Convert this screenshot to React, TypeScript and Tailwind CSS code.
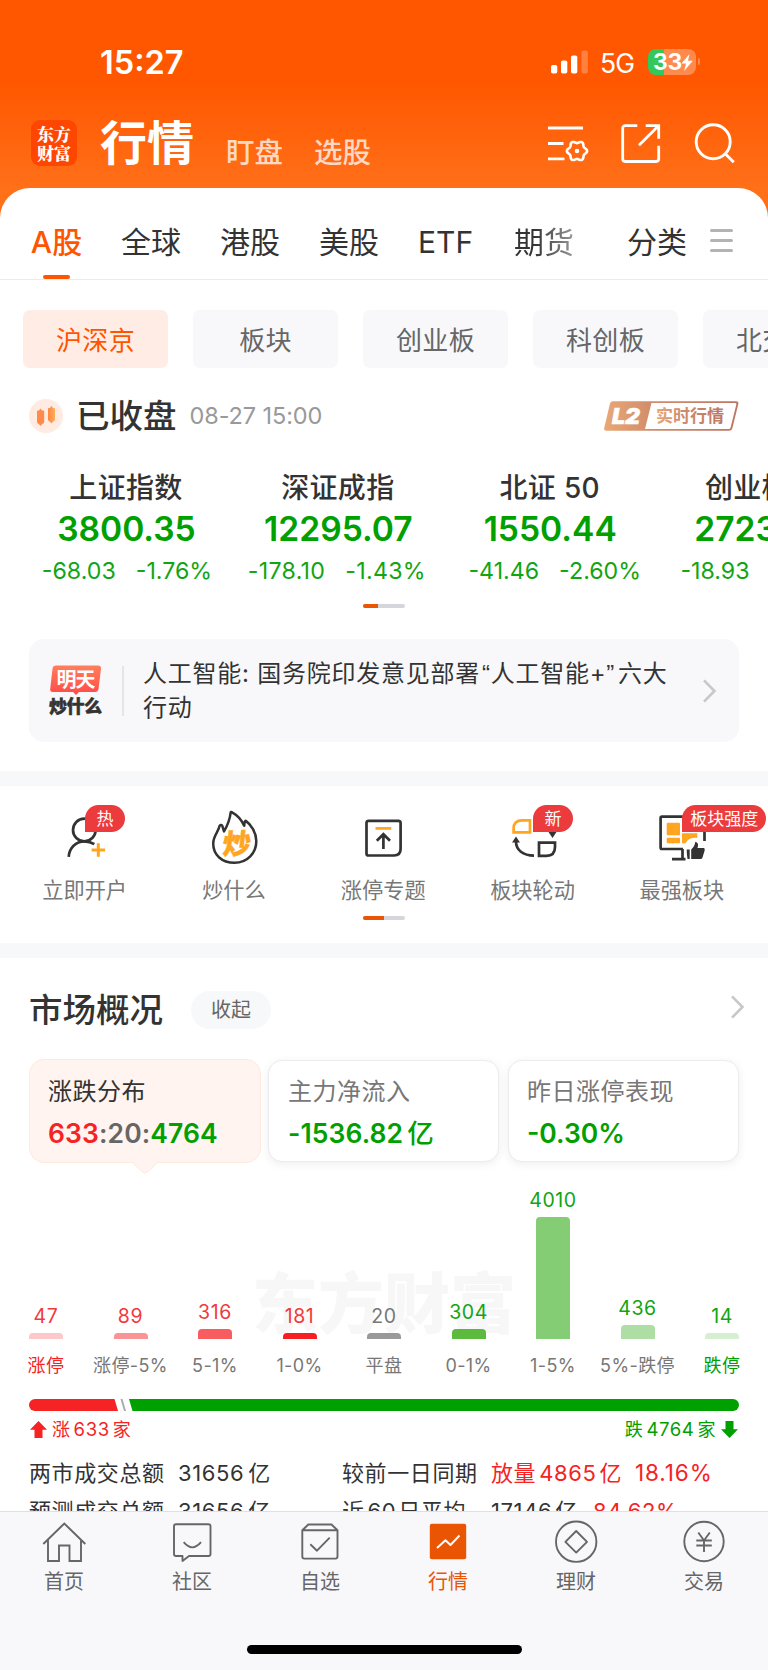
import React from "react";

const tabs = [
  { label: "全球", cls: "w-[60px] ml-[39px]" },
  { label: "港股", cls: "w-[60px] ml-[39px]" },
  { label: "美股", cls: "w-[60px] ml-[39px]" },
  { label: "ETF", cls: "w-[58px] ml-[39px]" },
];

const chips = ["沪深京", "板块", "创业板", "科创板", "北交所"];

const indices = [
  { name: "上证指数", value: "3800.35", diff: "-68.03", pct: "-1.76%", shift: "pl-[2px]" },
  { name: "深证成指", value: "12295.07", diff: "-178.10", pct: "-1.43%", shift: "pr-[2px] tracking-[0.3px]" },
  { name: "北证 50", value: "1550.44", diff: "-41.46", pct: "-2.60%", shift: "pl-[10px]" },
  { name: "创业板指", value: "2723.20", diff: "-18.93", pct: "-0.69%", shift: "pl-[9px]" },
];

const bars = [
  { n: "47", h: 6, color: "bg-[#fcc8ca]", num: "text-[#f23a3d]", label: "涨停", lab: "text-[#f52323]" },
  { n: "89", h: 6, color: "bg-[#f99395]", num: "text-[#f23a3d]", label: "涨停-5%", lab: "text-[#777]" },
  { n: "316", h: 10, color: "bg-[#f75c5f]", num: "text-[#f23a3d]", label: "5-1%", lab: "text-[#777]" },
  { n: "181", h: 6, color: "bg-[#f62023]", num: "text-[#f23a3d]", label: "1-0%", lab: "text-[#777]" },
  { n: "20", h: 6, color: "bg-[#999]", num: "text-[#777]", label: "平盘", lab: "text-[#777]" },
  { n: "304", h: 10, color: "bg-[#5cba3f]", num: "text-[#12a512]", label: "0-1%", lab: "text-[#777]" },
  { n: "4010", h: 122, color: "bg-[#84cd74]", num: "text-[#12a512]", label: "1-5%", lab: "text-[#777]" },
  { n: "436", h: 14, color: "bg-[#aedea3]", num: "text-[#12a512]", label: "5%-跌停", lab: "text-[#777]" },
  { n: "14", h: 6, color: "bg-[#d6efd0]", num: "text-[#12a512]", label: "跌停", lab: "text-[#00a000]" },
];

const gearPoints = Array.from({ length: 96 }, (_, i) => {
  const t = (i / 96) * Math.PI * 2;
  const r = 9 + 1.1 * Math.cos(6 * t);
  return `${(29 + r * Math.cos(t)).toFixed(2)},${(27 + r * Math.sin(t)).toFixed(2)}`;
}).join(" ");

function StatusBar() {
  return (
    <div className="flex h-[76px] items-end pl-[100px] text-white">
      <div className="-mb-[1px] h-[28px] w-[451px] text-[32.5px] leading-[28px] font-semibold">15:27</div>
      <svg className="mb-[2px] h-[24px] w-[38px]" viewBox="0 0 38 24" fill="#fff">
        <rect x="0" y="15" width="6.3" height="8.6" rx="1.8" />
        <rect x="10" y="10.5" width="6.3" height="13.1" rx="1.8" />
        <rect x="20" y="5.5" width="6.3" height="18.1" rx="1.8" />
        <rect x="30.5" y="0.5" width="6.3" height="23.1" rx="1.8" opacity=".25" />
      </svg>
      <div className="mb-px ml-[11px] h-[24px] w-[48px] text-[26.5px] leading-[24px] tracking-[-0.8px]">5G</div>
      <div className="mb-px flex h-[26px] w-[48px] items-center overflow-hidden rounded-[8px] bg-[linear-gradient(90deg,#34c759_33%,#ff8a4d_33%)] pl-[5px]">
        <span className="text-[23px] leading-[26px] font-bold tracking-[-0.4px]">33</span>
        <svg className="-ml-px h-[17px] w-[12px]" viewBox="0 0 12 17" fill="#fff">
          <path d="M8.5 0 0.5 9.6H5L3.2 17 11.8 6.8H7Z" />
        </svg>
      </div>
      <div className="mb-[11px] ml-[2px] h-[7px] w-[2px] rounded-r bg-[#ff8a4d]" />
    </div>
  );
}

function Header() {
  return (
    <div className="flex h-[112px] pl-[31px] text-white">
      <div className="mt-[44px] flex h-[46px] w-[46px] flex-col items-center justify-center rounded-[9px] bg-[#ff4600] font-['Noto_Serif_CJK_SC','Noto_Sans_CJK_SC',serif] text-[17px] leading-[19px] font-black">
        <span>东方</span>
        <span>财富</span>
      </div>
      <div className="mt-[39px] ml-[23px] h-[56px] w-[126px] text-[47px] leading-[56px] font-bold">行情</div>
      <div className="mt-[59px] h-[36px] w-[88px] text-[28.5px] leading-[36px] font-medium text-white/75">盯盘</div>
      <div className="mt-[59px] h-[36px] w-[234px] text-[28.5px] leading-[36px] font-medium text-white/75">选股</div>
      <svg className="mt-[48px] h-[40px] w-[42px]" viewBox="0 0 42 40" fill="none" stroke="#fff" strokeWidth="2.8">
        <path d="M0 4H35M0 19.5H15.5M0 34.8H16.5" />
        <polygon points={gearPoints} strokeWidth="2.6" strokeLinejoin="round" />
        <circle cx="29" cy="27" r="2.3" fill="#fff" stroke="none" />
      </svg>
      <svg className="mt-[47px] ml-[31px] h-[41px] w-[41px]" viewBox="0 0 41 41" fill="none" stroke="#fff" strokeWidth="2.8">
        <path d="M16.3 2.7H4.2A2.5 2.5 0 0 0 1.7 5.2V36.2A2.5 2.5 0 0 0 4.2 38.5H35.2A2.5 2.5 0 0 0 37.7 36.2V22.7M24.7 2.7H37.7V15.7M37.3 3.1 18 22.2" />
      </svg>
      <svg className="mt-[47px] ml-[32px] h-[41px] w-[42px]" viewBox="0 0 42 41" fill="none" stroke="#fff" strokeWidth="2.9">
        <circle cx="19.2" cy="18.7" r="17" />
        <path d="M31 30.5 39.8 39.3" />
      </svg>
    </div>
  );
}

function MarketTabs() {
  return (
    <div className="flex h-[92px] border-b border-[#ebebeb] pl-[31px] text-[30px] text-[#333]">
      <div className="flex w-[51px] flex-col items-center text-[#ff5500]">
        <div className="mt-[32px] h-[44px] text-[30px] leading-[44px] font-medium whitespace-nowrap">A股</div>
        <div className="mt-[11px] h-[4px] w-[27px] rounded-full bg-[#ff5500]" />
      </div>
      {tabs.map((t) => (
        <div key={t.label} className={`mt-[32px] leading-[44px] whitespace-nowrap ${t.cls}`}>
          {t.label}
        </div>
      ))}
      <div className="mt-[32px] ml-[38px] h-[44px] w-[60px] bg-[linear-gradient(90deg,#333_35%,#999_100%)] bg-clip-text leading-[44px] text-transparent">期货</div>
      <div className="mt-[32px] ml-[53px] w-[60px] leading-[44px]">分类</div>
      <div className="mt-[41px] ml-[23px] flex h-[23px] w-[23px] flex-col justify-between">
        <div className="h-[3px] rounded-full bg-[#b3b3b3]" />
        <div className="h-[3px] rounded-full bg-[#b3b3b3]" />
        <div className="h-[3px] rounded-full bg-[#b3b3b3]" />
      </div>
    </div>
  );
}

function LevelTwoBadge() {
  return (
    <svg className="h-[32px] w-[137px]" viewBox="0 0 137 32">
      <defs>
        <linearGradient id="copper" x1="0" x2="1" y1="0" y2="0">
          <stop offset="0" stopColor="#e9a876" />
          <stop offset=".35" stopColor="#d18d6b" />
          <stop offset="1" stopColor="#bd7563" />
        </linearGradient>
      </defs>
      <path d="M10 1.2H133Q136 1.2 135.3 4L129.3 28.5Q128.6 30.8 126 30.8H3.5Q.6 30.8 1.2 28L7 3.6Q7.6 1.2 10 1.2Z" fill="url(#copper)" />
      <path d="M48.5 3H132Q133.7 3 133.3 4.4L127.6 27.4Q127.2 29 125.6 29H42Z" fill="#fff" />
      <text x="9" y="23.7" fontSize="21" fontWeight="900" fontStyle="italic" fill="#fff" stroke="#fff" strokeWidth=".6" textLength="28" lengthAdjust="spacingAndGlyphs">L2</text>
      <text x="53" y="22.3" fontSize="17" fontWeight="700" fill="url(#copper)" textLength="68">实时行情</text>
    </svg>
  );
}

function Pager({ active }: { active: string }) {
  return (
    <div className="h-[4px] w-[42px] overflow-hidden rounded-full bg-[#d4d6dc]">
      <div className={`h-full bg-[#ea5504] ${active}`} />
    </div>
  );
}

function Chevron() {
  return (
    <svg className="h-[26px] w-[16px]" viewBox="0 0 16 26" fill="none" stroke="#c8c8c8" strokeWidth="2.6">
      <path d="M2 2.3 12.5 13 2 23.7" />
    </svg>
  );
}

function Feature({ label, badge, badgeClass, children }: { label: string; badge?: string; badgeClass?: string; children: React.ReactNode }) {
  return (
    <div className="relative flex w-[149.3px] flex-col items-center">
      <svg className="mt-[22px] h-[58px] w-[52px]" viewBox="0 0 52 58" fill="none" stroke="#333" strokeWidth="2.7">
        {children}
      </svg>
      <div className="mt-[9px] text-[21.2px] leading-[30px] whitespace-nowrap text-[#777]">{label}</div>
      {badge && (
        <div className={`absolute top-[19px] left-[75px] h-[27px] rounded-[14px] rounded-bl-none bg-[#ec3b3c] text-center text-[17px] leading-[28px] text-white ${badgeClass}`}>
          {badge}
        </div>
      )}
    </div>
  );
}

function Features() {
  return (
    <div className="flex h-[157px] flex-col items-center bg-white">
      <div className="mr-px flex h-[130px] w-[747px]">
        <Feature label="立即开户" badge="热" badgeClass="w-[40px]">
          <circle cx="25.3" cy="22" r="11.3" />
          <path d="M9.7 48.8C10.2 40 17 33.4 25.3 33.4c3.7 0 7 .9 10 2.8" />
          <path d="M39.3 35.3V48.7M32.6 42H46" stroke="#ffa51f" strokeWidth="3" />
        </Feature>
        <Feature label="炒什么">
          <path d="M22.7 4.3C21.8 12 20 16.5 16 23.5L14.3 17.8Q13 16.3 11.5 18C10.5 24 5.2 27.5 5.2 35.5C5.2 47 14 54.8 26.5 54.8C39.5 54.8 48.3 45 48.3 33C48.3 24.5 43 16.5 37.800 12.9Q36.6 12.5 36.2 17.800C33.5 11.8 29.5 7.3 24.5 4.6Q23 3.7 22.7 4.3Z" strokeLinejoin="round" strokeWidth="2.5" />
          <text x="14.5" y="46.5" fontSize="28" fontWeight="900" fill="#ffa51f" stroke="#ffa51f" strokeWidth=".5" transform="translate(4.2 0) skewX(-6)">炒</text>
        </Feature>
        <Feature label="涨停专题">
          <path d="M11.5 12.8H41.4Q43.6 12.8 43.6 15V41Q43.6 47.5 37 47.5H11.5Q9.5 47.5 9.5 45.5V15Q9.5 12.8 11.5 12.8Z" />
          <path d="M18.5 20.4H34.3" stroke="#ffa51f" />
          <path d="M26.4 41V27M19.8 32.8 26.4 26.2 33 32.8" />
        </Feature>
        <Feature label="板块轮动" badge="新" badgeClass="w-[40px]">
          <path d="M23 12.3H15Q6.6 12.3 6.6 20.5V24.4H23Z" stroke="#ffa51f" />
          <path d="M32 34.6H48V39Q48 47.8 39.5 47.8H32Z" />
          <path d="M27 47.6C16 47.6 9 42 9 33.5" />
          <path d="M9 28.5 13 34.5H5ZM41.5 24H49.5L45.5 30Z" fill="#333" stroke="none" />
        </Feature>
        <Feature label="最强板块" badge="板块强度" badgeClass="w-[84px]">
          <path d="M48.5 30V9.5Q48.5 8.6 47 8.6H6Q4.6 8.6 4.6 10V39.5Q4.6 41 6 41H27M48.5 22V33M16 51.2H29.5M26.5 41V50.5" />
          <g fill="#ffa51f" stroke="none">
            <rect x="10.7" y="14.7" width="13.3" height="12.6" rx="1" />
            <rect x="10.7" y="29.7" width="13.3" height="5.6" rx="1" />
            <path d="M26 25.3H41.3V30Q33 29 29.5 35.3H26Z" />
          </g>
          <path d="M30.7 41.5H33.7V51H31.5Q30.7 46 30.7 41.5ZM35.2 51V41.5Q38.8 38.5 39.3 33.8 43.3 34.8 41.5 40H48Q49.3 40.3 48.5 43L46.5 49.5Q46.2 51 44.5 51Z" fill="#333" stroke="none" />
        </Feature>
      </div>
      <Pager active="w-[21px]" />
    </div>
  );
}

function Overview() {
  return (
    <div className="flex h-[553px] flex-col overflow-hidden bg-white px-[29px]">
      <div className="mt-[28px] flex h-[48px] items-center">
        <div className="text-[33.5px] leading-[48px] font-medium text-[#333]">市场概况</div>
        <div className="ml-[28px] h-[38px] w-[80px] rounded-full bg-[#f7f8fa] text-center text-[20px] leading-[38px] text-[#666]">收起</div>
        <div className="-mt-[6px] -mr-[7px] ml-auto">
          <Chevron />
        </div>
      </div>

      <div className="mt-[25px] flex h-[104px] shrink-0 text-[24px]">
        <div className="relative w-[232px] rounded-[15px] border border-[#ffe8dd] bg-[#fff4ef] pt-[15px] pl-[18px]">
          <div className="leading-[34px] tracking-[0.5px] text-[#333]">涨跌分布</div>
          <div className="mt-[6px] text-[26.5px] leading-[36px] font-semibold tracking-[0.1px] text-[#666]">
            <span className="text-[#f52323]">633</span>:20:<span className="text-[#00a000]">4764</span>
          </div>
          <svg className="absolute top-[101px] left-[101px] h-[14px] w-[28px]" viewBox="0 0 28 14">
            <path d="M1 1.3 12 11.3Q14 12.8 16 11.3L27 1.3V0H1Z" fill="#fff4ef" />
            <path d="M1 1.3 12 11.3Q14 12.8 16 11.3L27 1.3" fill="none" stroke="#ffe8dd" />
          </svg>
        </div>
        <div className="mt-px ml-[7px] h-[102px] w-[231px] rounded-[14px] border border-[#ececec] bg-white pt-[14px] pl-[19px] shadow-[0_2px_10px_rgba(0,0,0,0.07)]">
          <div className="leading-[34px] tracking-[0.5px] text-[#777]">主力净流入</div>
          <div className="mt-[6px] text-[26.5px] leading-[36px] font-semibold tracking-[0.1px] whitespace-nowrap text-[#00a000]">-1536.82<span className="pl-[4px] text-[26.5px] font-medium">亿</span></div>
        </div>
        <div className="mt-px ml-[9px] h-[102px] w-[231px] rounded-[14px] border border-[#ececec] bg-white pt-[14px] pl-[18px] shadow-[0_2px_10px_rgba(0,0,0,0.07)]">
          <div className="leading-[34px] tracking-[0.5px] text-[#777]">昨日涨停表现</div>
          <div className="mt-[6px] text-[26.5px] leading-[36px] font-semibold text-[#00a000]">-0.30%</div>
        </div>
      </div>

      <div className="relative mt-[15px] flex h-[202px] shrink-0 justify-between">
        <div className="absolute top-[78px] left-[223px] text-[66px] leading-[96px] font-black whitespace-nowrap text-[#f7f7f7]">东方财富</div>
        {bars.map((b) => (
          <div key={b.label} className="relative flex w-[34px] flex-col items-center justify-end">
            <div className={`text-[19.5px] leading-[20px] tracking-[0.6px] ${b.num}`}>{b.n}</div>
            <div className={`mt-[7px] w-full shrink-0 rounded-t-[4px] ${b.color}`} style={{ height: b.h }} />
            <div className={`mt-[13px] h-[28px] text-[18px] leading-[28px] tracking-[0.4px] whitespace-nowrap ${b.lab}`}>{b.label}</div>
          </div>
        ))}
      </div>

      <svg className="mt-[19px] h-[12px] w-[710px] shrink-0" viewBox="0 0 710 12">
        <path d="M6 0H85.5L89 12H6A6 6 0 0 1 6 0Z" fill="#f52323" />
        <path d="M91.5 0H93.5L97 12H95Z" fill="#aaa" />
        <path d="M100 0H704A6 6 0 0 1 704 12H103.5Z" fill="#00a000" />
      </svg>

      <div className="mt-[4px] flex h-[28px] shrink-0 items-center text-[18px] leading-[28px] tracking-[0.6px]">
        <svg className="ml-px h-[17px] w-[17px]" viewBox="0 0 17 17" fill="#f52323">
          <path d="M8.5 0 17 8.800H12.5V17H4.5V8.800H0Z" />
        </svg>
        <span className="ml-[5px] text-[#f52323]">涨<span className="px-[3px] text-[18.5px]">633</span>家</span>
        <span className="ml-auto text-[#00a000]">跌<span className="px-[3px] text-[18.5px]">4764</span>家</span>
        <svg className="mr-px ml-[5px] h-[17px] w-[17px]" viewBox="0 0 17 17" fill="#00a000">
          <path d="M8.5 17 17 8.2H12.5V0H4.5V8.2H0Z" />
        </svg>
      </div>

      <div className="mt-[11px] flex h-[38px] shrink-0 text-[22px] leading-[38px] tracking-[0.6px] whitespace-nowrap text-[#333]">
        <div className="w-[149px]">两市成交总额</div>
        <div className="w-[164px]">31656<span className="pl-[4px]">亿</span></div>
        <div className="w-[149px]">较前一日同期</div>
        <div className="w-[144px] text-[#f52323]">放量<span className="px-[3px]">4865</span>亿</div>
        <div className="text-[22.5px] tracking-[0.9px] text-[#f52323]">18.16%</div>
      </div>
      <div className="flex h-[38px] shrink-0 text-[22px] leading-[38px] tracking-[0.6px] whitespace-nowrap text-[#333]">
        <div className="w-[149px]">预测成交总额</div>
        <div className="w-[164px]">31656<span className="pl-[4px]">亿</span></div>
        <div className="w-[149px]">近<span className="pr-[2px] pl-[3px]">60</span>日平均</div>
        <div className="w-[102px]">17146<span className="pl-[3px]">亿</span></div>
        <div className="text-[#f52323]">84.62%</div>
      </div>
    </div>
  );
}

function NavItem({ label, active, children }: { label: string; active?: boolean; children: React.ReactNode }) {
  return (
    <div className={`flex flex-1 flex-col items-center ${active ? "text-[#ea5504]" : "text-[#666]"}`}>
      <svg className="mt-[8px] mr-px h-[44px] w-[44px]" viewBox="0 0 44 44" fill="none" stroke="currentColor" strokeWidth="1.9" strokeLinejoin="round">
        {children}
      </svg>
      <div className="mt-[3px] text-[20px] leading-[30px]">{label}</div>
    </div>
  );
}

function BottomNav() {
  return (
    <div className="flex h-[159px] flex-col items-center border-t border-[#dfe0e2] bg-[#f8f8fb]">
      <div className="flex h-[133px] w-full">
        <NavItem label="首页">
          <path d="M1.3 24 22.3 3.5 43.3 24M6 20V41H17V25.5H27.5V41H39V20" strokeLinejoin="miter" />
        </NavItem>
        <NavItem label="社区">
          <path d="M6 4.3H38.5Q40.5 4.3 40.5 6.3V34Q40.5 36 38.5 36H19L12.5 41V36H6Q4 36 4 34V6.3Q4 4.3 6 4.3ZM13.7 22.2Q22.3 32.5 31 22.2" />
        </NavItem>
        <NavItem label="自选">
          <path d="M10.3 4.5H33.5L39.5 10.2V36.5Q39.5 38.6 37.5 38.6H6.3Q4.3 38.6 4.3 36.5V10.2ZM4.3 10.2H39.5M12.3 24.3 19 30.7 31.7 17.7" />
        </NavItem>
        <NavItem label="行情" active>
          <rect x="3.8" y="3.7" width="36.4" height="35.6" rx="2" fill="#ea5504" stroke="none" />
          <path d="M11 28 19.5 20.3 24.5 25 33.500 15.5" stroke="#fff" strokeWidth="2" />
        </NavItem>
        <NavItem label="理财">
          <circle cx="22.2" cy="21.7" r="20.2" />
          <path d="M22.2 11 33 21.8 22.2 32.6 11.4 21.8Z" />
        </NavItem>
        <NavItem label="交易">
          <circle cx="22" cy="21.5" r="19.7" />
          <path d="M16.3 12.5 22 20.5 27.8 12.5M14.3 20.5H29.8M14.3 25.5H29.8M22 20.5V32" />
        </NavItem>
      </div>
      <div className="h-[9px] w-[275px] rounded-full bg-black" />
    </div>
  );
}

export default function App() {
  return (
    <div className="flex h-[1670px] w-[768px] flex-col overflow-hidden bg-white font-['Inter','Noto_Sans_CJK_SC',sans-serif]">
      <div className="bg-[linear-gradient(180deg,#ff5700_0px,#ff5700_82px,#ff7019_188px,#ff7019_230px)]">
        <StatusBar />
        <Header />
        <div className="rounded-t-[30px] bg-white">
          <MarketTabs />
        </div>
      </div>

      <div className="flex h-[491px] flex-col overflow-hidden">
        <div className="mt-[30px] ml-[23px] flex h-[58px] w-[745px] gap-[25px] overflow-hidden">
          {chips.map((c, i) => (
            <div
              key={c}
              className={`w-[145px] shrink-0 rounded-[7px] text-center text-[26px] leading-[61px] tracking-[0.3px] ${i === 0 ? "bg-[#ffede5] text-[#ff5500]" : "bg-[#f8f8fb] text-[#666]"}`}
            >
              {c}
            </div>
          ))}
        </div>

        <div className="mt-[24px] flex h-[48px] items-center pr-[28px] pl-[29px]">
          <svg className="h-[34px] w-[34px]" viewBox="0 0 34 34">
            <defs>
              <linearGradient id="candle" x1="0" y1="0" x2="1" y2="0">
                <stop offset="0" stopColor="#ff8644" />
                <stop offset="1" stopColor="#ffaf58" />
              </linearGradient>
            </defs>
            <circle cx="17" cy="17" r="17" fill="#ffebe1" />
            <path d="M11.5 9.5 13 11.5H14.2Q15.2 11.5 15.2 12.5V23Q15.2 24.5 13.2 25L11.5 27 9.8 25Q8 24.5 8 23V12.5Q8 11.5 9 11.5H10Z" fill="#ff8a4a" />
            <path d="M22.4 6.800 24 9H25Q26 9 26 10V20.5Q26 22 24.2 22.5L22.4 24.5 20.7 22.5Q19 22 19 20.5V10Q19 9 20 9H21Z" fill="url(#candle)" />
          </svg>
          <div className="ml-[13px] text-[33.5px] leading-[48px] font-medium text-[#333]">已收盘</div>
          <div className="ml-[13px] text-[23.5px] tracking-[-0.1px] text-[#999]">08-27 15:00</div>
          <div className="ml-auto">
            <LevelTwoBadge />
          </div>
        </div>

        <div className="mt-[26px] ml-[20px] flex h-[138px] w-[748px] overflow-hidden">
          {indices.map((x) => (
            <div key={x.name} className="flex w-[211.9px] shrink-0 flex-col items-center">
              <div className="h-[42px] text-[28px] leading-[45px] font-medium tracking-[0.3px] text-[#333]">{x.name}</div>
              <div className="h-[42px] pl-px text-[33.6px] leading-[42px] font-semibold text-[#00a000]">{x.value}</div>
              <div className={`mt-[3px] flex gap-[20px] text-[23.2px] leading-[36px] text-[#12a512] ${x.shift}`}>
                <span>{x.diff}</span>
                <span>{x.pct}</span>
              </div>
            </div>
          ))}
        </div>
        <div className="flex justify-center">
          <Pager active="w-[15px]" />
        </div>

        <div className="mt-[31px] ml-[29px] flex h-[103px] w-[710px] items-center rounded-[15px] bg-[#f8f8fb]">
          <svg className="ml-[19px] h-[54px] w-[56px]" viewBox="0 0 56 54">
            <defs>
              <linearGradient id="tomorrow" x1="0" y1="0" x2="0" y2="1">
                <stop offset="0" stopColor="#ff7f5c" />
                <stop offset="1" stopColor="#ff4a4a" />
              </linearGradient>
            </defs>
            <path d="M8 1.5H50Q53.5 1.5 53 5L50.5 25Q50 28 47 28H31L28 31 25 28H5Q1.8 28 2.2 25L4.5 4.5Q5 1.5 8 1.5Z" fill="url(#tomorrow)" />
            <text x="8.5" y="22.5" fontSize="20" fontWeight="700" fill="#fff" textLength="39">明天</text>
            <text x="1" y="48.5" fontSize="18" fontWeight="900" fill="#333" stroke="#333" strokeWidth=".5" textLength="53">炒什么</text>
          </svg>
          <div className="ml-[18px] h-[50px] w-[2px] bg-[#e5e5e7]" />
          <div className="mt-px ml-[19px] w-[550px] text-[24px] leading-[34px] tracking-[0.75px] whitespace-nowrap text-[#333]">
            <div>
              人工智能: 国务院印发意见部署<span className="pl-[2px] font-['Liberation_Sans']">“</span>人工智能+<span className="pr-[3px] font-['Liberation_Sans']">”</span>六大
            </div>
            <div>行动</div>
          </div>
          <div className="ml-[9px]">
            <Chevron />
          </div>
        </div>
      </div>

      <div className="h-[15px] bg-[#f7f8fa]" />
      <Features />
      <div className="h-[15px] bg-[#f7f8fa]" />
      <Overview />
      <BottomNav />
    </div>
  );
}
